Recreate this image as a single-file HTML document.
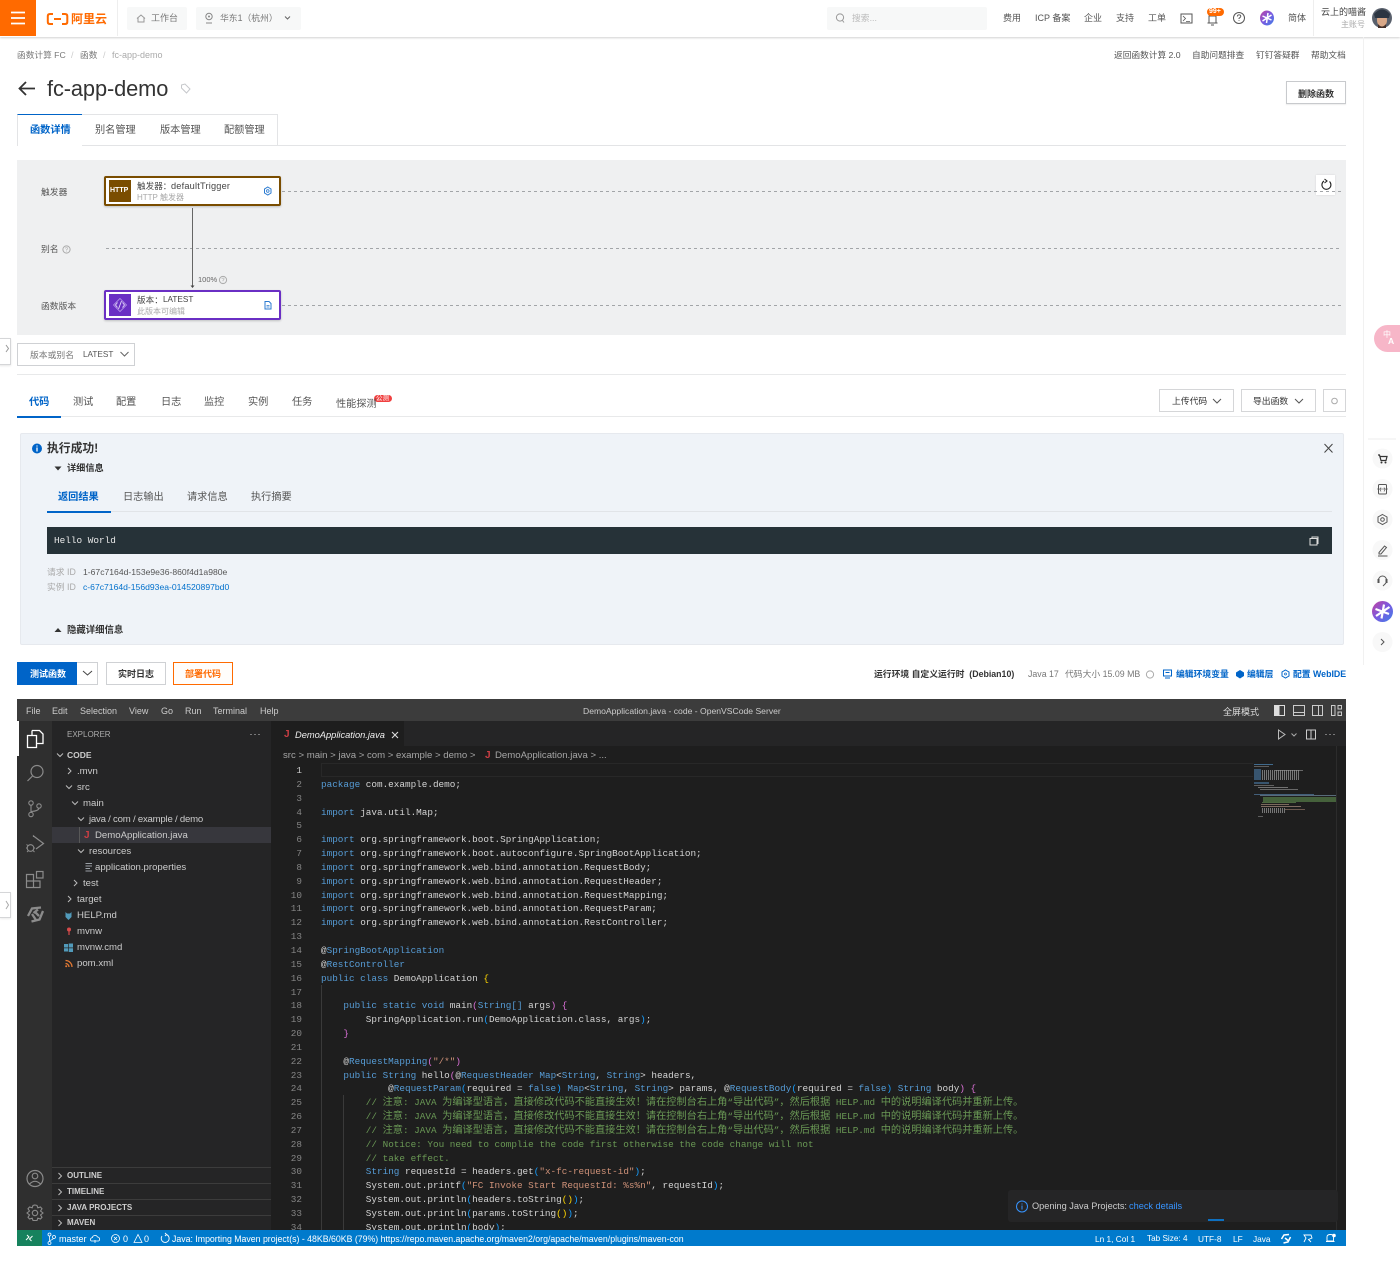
<!DOCTYPE html>
<html lang="zh-CN">
<head>
<meta charset="utf-8">
<title>fc-app-demo</title>
<style>
html,body{margin:0;padding:0;background:#fff;}
body{position:relative;width:1400px;height:1277px;overflow:hidden;font-family:"Liberation Sans","Noto Sans CJK SC",sans-serif;}
.r{position:absolute;box-sizing:border-box;}
.t{position:absolute;white-space:nowrap;line-height:14px;font-size:10.2px;color:#333;}
.g{color:#888;}
.b{color:#0064c8;}
.w{font-weight:700;}
.s{color:#ccc;font-size:9.6px;}
.m{color:#fff;font-size:9px;}
.h{color:#cfcfcf;font-size:8px;font-weight:700;}
pre{position:absolute;margin:0;font-family:"Liberation Mono","Noto Sans CJK SC",monospace;font-size:9.33px;line-height:13.84px;color:#d4d4d4;}
pre b{font-weight:400;font-size:10.2px;font-family:"Noto Sans CJK SC",sans-serif;line-height:0;}
.k{color:#569cd6}.st{color:#ce9178}.c{color:#6a9955}.y{color:#ffd700}.p{color:#da70d6}.l{color:#179fff}
svg{position:absolute;left:0;top:0;}
</style>
</head>
<body>
<!-- header -->
<div class="r" style="left:0;top:0;width:1400px;height:37px;background:#fff;box-shadow:0 1px 2px rgba(0,0,0,.18);"></div>
<div class="r" style="left:0;top:0;width:36px;height:36px;background:#ff6a00;"></div>
<div class="r" style="left:117px;top:0;width:1px;height:36px;background:#eee;"></div>
<div class="r" style="left:127px;top:7px;width:60px;height:23px;background:#f7f8f8;border-radius:2px;"></div>
<div class="r" style="left:196px;top:7px;width:105px;height:23px;background:#f7f8f8;border-radius:2px;"></div>
<div class="r" style="left:827px;top:7px;width:160px;height:23px;background:#f7f8f8;border-radius:2px;"></div>
<div class="r" style="left:1313px;top:0;width:1px;height:36px;background:#eee;"></div>
<div class="r" style="left:1363px;top:37px;width:1px;height:628px;background:#f1f1f1;"></div>

<!-- page lines & tabs -->
<div class="r" style="left:17px;top:145px;width:1329px;height:1px;background:#e3e4e6;"></div>
<div class="r" style="left:17px;top:114px;width:66px;height:32px;background:#fff;border-top:1px solid #0064c8;border-left:1px solid #e3e4e6;border-right:1px solid #e3e4e6;"></div>
<div class="r" style="left:82px;top:114px;width:66px;height:31px;background:#fff;border-top:1px solid #e3e4e6;border-right:1px solid #e3e4e6;"></div>
<div class="r" style="left:147px;top:114px;width:66px;height:31px;background:#fff;border-top:1px solid #e3e4e6;border-right:1px solid #e3e4e6;"></div>
<div class="r" style="left:212px;top:114px;width:66px;height:31px;background:#fff;border-top:1px solid #e3e4e6;border-right:1px solid #e3e4e6;"></div>
<div class="r" style="left:1286px;top:81px;width:60px;height:23px;background:#fff;border:1px solid #c8cacd;box-shadow:0 1px 1px rgba(0,0,0,.08);"></div>

<!-- diagram -->
<div class="r" style="left:17px;top:160px;width:1329px;height:175px;background:#eff0f1;"></div>
<div class="r" style="left:104px;top:176px;width:177px;height:30px;background:#fff;border:2px solid #7a4d00;border-radius:2px;box-shadow:0 1px 2px rgba(0,0,0,.2);"></div>
<div class="r" style="left:109px;top:180px;width:22px;height:22px;background:#7a4d00;"></div>
<div class="r" style="left:104px;top:290px;width:177px;height:30px;background:#fff;border:2px solid #6a2fc4;border-radius:2px;box-shadow:0 1px 2px rgba(0,0,0,.2);"></div>
<div class="r" style="left:109px;top:294px;width:22px;height:22px;background:#6a2fc4;"></div>
<div class="r" style="left:1316px;top:175px;width:19px;height:20px;background:#fff;box-shadow:0 0 2px rgba(0,0,0,.12);"></div>

<!-- selector row -->
<div class="r" style="left:-1px;top:338px;width:12px;height:27px;background:#fff;border:1px solid #d5d6d8;box-shadow:0 1px 2px rgba(0,0,0,.1);"></div>
<div class="r" style="left:0;top:892px;width:11px;height:26px;background:#fff;border:1px solid #d5d6d8;border-left:0;box-shadow:0 1px 2px rgba(0,0,0,.08);"></div>
<div class="r" style="left:17px;top:343px;width:118px;height:23px;background:#fff;border:1px solid #cfd1d4;"></div>
<div class="r" style="left:17px;top:374px;width:1329px;height:1px;background:#e8e9ea;"></div>
<div class="r" style="left:17px;top:416px;width:1329px;height:1px;background:#e8e9ea;"></div>
<div class="r" style="left:17px;top:416px;width:44px;height:2px;background:#0064c8;"></div>
<div class="r" style="left:1159px;top:389px;width:75px;height:23px;background:#fff;border:1px solid #d5d6d8;"></div>
<div class="r" style="left:1241px;top:389px;width:75px;height:23px;background:#fff;border:1px solid #d5d6d8;"></div>
<div class="r" style="left:1323px;top:389px;width:23px;height:23px;background:#fff;border:1px solid #d5d6d8;"></div>
<div class="r" style="left:374px;top:395px;width:18px;height:7px;background:#f04040;border-radius:4px;"></div>

<!-- alert -->
<div class="r" style="left:20px;top:433px;width:1324px;height:212px;background:#eff3f8;border:1px solid #e6e9ee;border-radius:2px;"></div>
<div class="r" style="left:47px;top:511px;width:1285px;height:1px;background:#e1e4e8;"></div>
<div class="r" style="left:47px;top:511px;width:64px;height:2px;background:#0064c8;"></div>
<div class="r" style="left:47px;top:527px;width:1285px;height:27px;background:#263238;"></div>

<!-- action row -->
<div class="r" style="left:17px;top:662px;width:60px;height:23px;background:#0064c8;"></div>
<div class="r" style="left:77px;top:662px;width:21px;height:23px;background:#fff;border:1px solid #cfd1d4;border-left:0;"></div>
<div class="r" style="left:106px;top:662px;width:60px;height:23px;background:#fff;border:1px solid #cfd1d4;"></div>
<div class="r" style="left:173px;top:662px;width:60px;height:23px;background:#fffdfb;border:1px solid #ff6a00;"></div>

<!-- vscode -->
<div class="r" style="left:17px;top:699px;width:1329px;height:547px;background:#1e1e1e;overflow:hidden;"></div>
<div class="r" style="left:17px;top:699px;width:1329px;height:22px;background:#3c3c3c;"></div>
<div class="r" style="left:17px;top:721px;width:35px;height:509px;background:#2f2f2f;"></div>
<div class="r" style="left:52px;top:721px;width:219px;height:509px;background:#252526;"></div>
<div class="r" style="left:17px;top:721px;width:2px;height:35px;background:#fff;"></div>
<div class="r" style="left:52px;top:827px;width:219px;height:16px;background:#37373d;"></div>
<div class="r" style="left:79px;top:827px;width:1px;height:16px;background:#585858;"></div>
<div class="r" style="left:52px;top:1167px;width:219px;height:1px;background:#3c3c3c;"></div>
<div class="r" style="left:52px;top:1183px;width:219px;height:1px;background:#3c3c3c;"></div>
<div class="r" style="left:52px;top:1199px;width:219px;height:1px;background:#3c3c3c;"></div>
<div class="r" style="left:52px;top:1215px;width:219px;height:1px;background:#3c3c3c;"></div>
<div class="r" style="left:271px;top:721px;width:1075px;height:25px;background:#252526;"></div>
<div class="r" style="left:271px;top:721px;width:133px;height:25px;background:#1e1e1e;"></div>
<div class="r" style="left:321px;top:763px;width:932px;height:14px;border:1px solid #282828;border-right:0;"></div>
<div class="r" style="left:321px;top:985px;width:1px;height:245px;background:#3a3a3a;"></div>
<div class="r" style="left:343px;top:1095px;width:1px;height:135px;background:#3a3a3a;"></div>
<div class="r" style="left:1336px;top:746px;width:1px;height:484px;background:#2c2c2c;"></div>

<!-- code -->
<div class="r" style="left:271px;top:764px;width:1060px;height:466px;overflow:hidden;">
<pre style="left:0;top:0;width:31px;text-align:right;color:#858585;"><span style="color:#c6c6c6">1</span>
2
3
4
5
6
7
8
9
10
11
12
13
14
15
16
17
18
19
20
21
22
23
24
25
26
27
28
29
30
31
32
33
34</pre>
<pre style="left:50px;top:0;">

<span class="k">package</span> com.example.demo;

<span class="k">import</span> java.util.Map;

<span class="k">import</span> org.springframework.boot.SpringApplication;
<span class="k">import</span> org.springframework.boot.autoconfigure.SpringBootApplication;
<span class="k">import</span> org.springframework.web.bind.annotation.RequestBody;
<span class="k">import</span> org.springframework.web.bind.annotation.RequestHeader;
<span class="k">import</span> org.springframework.web.bind.annotation.RequestMapping;
<span class="k">import</span> org.springframework.web.bind.annotation.RequestParam;
<span class="k">import</span> org.springframework.web.bind.annotation.RestController;

@<span class="k">SpringBootApplication</span>
@<span class="k">RestController</span>
<span class="k">public class</span> DemoApplication <span class="y">{</span>

    <span class="k">public static void</span> main<span class="p">(</span><span class="k">String[]</span> args<span class="p">)</span> <span class="p">{</span>
        SpringApplication.run<span class="l">(</span>DemoApplication.class, args<span class="l">)</span>;
    <span class="p">}</span>

    @<span class="k">RequestMapping</span><span class="p">(</span><span class="st">"/*"</span><span class="p">)</span>
    <span class="k">public String</span> hello<span class="p">(</span>@<span class="k">RequestHeader Map</span>&lt;<span class="k">String</span>, <span class="k">String</span>&gt; headers,
            @<span class="k">RequestParam</span><span class="l">(</span>required = <span class="k">false</span><span class="l">)</span> <span class="k">Map</span>&lt;<span class="k">String</span>, <span class="k">String</span>&gt; params, @<span class="k">RequestBody</span><span class="l">(</span>required = <span class="k">false</span><span class="l">)</span> <span class="k">String</span> body<span class="p">)</span> <span class="p">{</span>
        <span class="c">// <b>注意</b>: JAVA <b>为编译型语言&#xFF0C;直接修改代码不能直接生效&#xFF01;请在控制台右上角</b>“<b>导出代码</b>”<b>&#xFF0C;然后根据</b> HELP.md <b>中的说明编译代码并重新上传。</b></span>
        <span class="c">// <b>注意</b>: JAVA <b>为编译型语言&#xFF0C;直接修改代码不能直接生效&#xFF01;请在控制台右上角</b>“<b>导出代码</b>”<b>&#xFF0C;然后根据</b> HELP.md <b>中的说明编译代码并重新上传。</b></span>
        <span class="c">// <b>注意</b>: JAVA <b>为编译型语言&#xFF0C;直接修改代码不能直接生效&#xFF01;请在控制台右上角</b>“<b>导出代码</b>”<b>&#xFF0C;然后根据</b> HELP.md <b>中的说明编译代码并重新上传。</b></span>
        <span class="c">// Notice: You need to complie the code first otherwise the code change will not</span>
        <span class="c">// take effect.</span>
        <span class="k">String</span> requestId = headers.get<span class="l">(</span><span class="st">"x-fc-request-id"</span><span class="l">)</span>;
        System.out.printf<span class="l">(</span><span class="st">"FC Invoke Start RequestId: %s%n"</span>, requestId<span class="l">)</span>;
        System.out.println<span class="l">(</span>headers.toString<span class="y">()</span><span class="l">)</span>;
        System.out.println<span class="l">(</span>params.toString<span class="y">()</span><span class="l">)</span>;
        System.out.println<span class="l">(</span>body<span class="l">)</span>;</pre>
</div>

<!-- notification & status bar -->
<div class="r" style="left:1008px;top:1190px;width:330px;height:32px;background:#252526;border-radius:3px;"></div>
<div class="r" style="left:1208px;top:1219px;width:16px;height:2px;background:#0e70c0;"></div>
<div class="r" style="left:17px;top:1230px;width:1329px;height:16px;background:#007acc;"></div>
<div class="r" style="left:17px;top:1230px;width:25px;height:16px;background:#16825d;"></div>

<!-- icons / line art -->
<svg width="1400" height="1277" viewBox="0 0 1400 1277" fill="none">
<!-- hamburger -->
<path d="M11 12.500H25M11 18H25M11 23.500H25" stroke="#fff" stroke-width="1.800"/>
<!-- logo -->
<path d="M53 14H50Q47.800 14 47.800 16V22Q47.800 24 50 24H53M62 14H65Q67.300 14 67.300 16V22Q67.300 24 65 24H62M54 19H61" stroke="#ff6a00" stroke-width="2"/>
<!-- header icons -->
<path d="M137 18.500L141 15L145 18.500M138 18V22H144V18" stroke="#999"/>
<circle cx="209" cy="16.500" r="3.200" stroke="#888"/><circle cx="209" cy="16.500" r="1" fill="#888"/><path d="M206 23H212" stroke="#888"/>
<path d="M285 16.500L287.500 19L290 16.500" stroke="#666"/>
<circle cx="840" cy="17.500" r="3.600" stroke="#999"/><path d="M842.500 20.500L844 22.500" stroke="#999"/>
<rect x="1181" y="14" width="11" height="9" stroke="#555"/><path d="M1183 16L1185.500 18.500L1183 21M1186 21.500H1190" stroke="#555" stroke-width=".8"/>
<path d="M1209 23V16H1216V23M1207.500 23H1217.500M1211 25H1214" stroke="#555"/>
<rect x="1207" y="8" width="17" height="8" rx="4" fill="#ff6a00"/>
<circle cx="1239" cy="18" r="5.500" stroke="#555"/><path d="M1237.300 16.500Q1237.500 14.800 1239 14.800Q1240.800 14.800 1240.800 16.300Q1240.800 17.300 1239 18.300V19M1239 20.300V21" stroke="#555" stroke-width=".9"/>
<defs>
<linearGradient id="st" x1="0" y1="0" x2="1" y2="1"><stop offset="0" stop-color="#c2409f"/><stop offset=".5" stop-color="#7a5be0"/><stop offset="1" stop-color="#3f7fe8"/></linearGradient>
<pattern id="mm" width="2" height="2" patternUnits="userSpaceOnUse"><rect width="1" height="2" fill="#b0b0b0"/></pattern>
</defs>
<ellipse cx="1267" cy="18" rx="7" ry="7.500" fill="url(#st)"/><path d="M1268 13L1266.500 23M1262.500 16L1271.500 20M1262.500 21L1271.500 15" stroke="#fff" stroke-width="1.500"/>
<circle cx="1382" cy="18" r="10" fill="#59606c"/><ellipse cx="1382" cy="20" rx="5" ry="7" fill="#d9a888"/><path d="M1374 14Q1382 5 1390 14L1389 18H1375Z" fill="#2c3542"/><path d="M1378 24Q1382 29 1386 24L1386 28H1378Z" fill="#43302a"/>
<!-- title -->
<path d="M35 88.500H19.500M26 82L19.500 88.500L26 95" stroke="#333" stroke-width="1.800"/>
<path d="M181.500 85L185 84L190 89L186.500 93L181.500 88Z" stroke="#c6c8cb"/>
<!-- diagram -->
<path d="M282 191.500H1342M106 248.500H1342M282 305.500H1342" stroke="#a2a5a8" stroke-dasharray="3 3"/>
<path d="M192.500 208V286" stroke="#666"/><path d="M190.500 285.500H194.500L192.500 288Z" fill="#444"/>
<circle cx="66.500" cy="249.500" r="3.600" stroke="#aaa"/><circle cx="223" cy="280" r="3.600" stroke="#aaa"/>
<path d="M65.300 248.500Q65.500 247.500 66.500 247.500Q67.700 247.500 67.600 248.600Q67.500 249.300 66.500 249.800V250.500M66.500 251.200V251.800M221.800 279Q222 278 223 278Q224.200 278 224.100 279.100Q224 279.800 223 280.300V281M223 281.700V282.300" stroke="#aaa" stroke-width=".6"/>
<path d="M267.800 187L271 189V193L267.800 195L264.500 193V189Z" stroke="#2a7ad0"/><circle cx="267.800" cy="191" r="1.300" stroke="#2a7ad0" stroke-width=".8"/>
<path d="M265 301.500H269L271 303.500V309H265Z" stroke="#2a7ad0"/><path d="M266.500 305.500H269.500M266.500 307H269.500" stroke="#2a7ad0" stroke-width=".7"/>
<path d="M120 298.500L126.500 305L120 311.500L113.500 305Z" stroke="#b79be8" stroke-width=".8"/><path d="M117.500 302.500L115.500 305L117.500 307.500M122.500 302.500L124.500 305L122.500 307.500M118.500 309L121.500 301" stroke="#e6dafa" stroke-width=".9"/>
<path d="M1329.500 181.500A4.500 4.500 0 1 1 1324 181M1324.500 179L1327 181L1324.500 183" stroke="#222" stroke-width="1.100"/>
<path d="M6 345L8.500 348.500L6 352" stroke="#999"/>
<path d="M120.500 352L124.500 356L128.500 352" stroke="#666"/>
<path d="M1213 399L1217 403L1221 399M1295 399L1299 403L1303 399" stroke="#555"/>
<circle cx="1334.500" cy="401" r="2.800" stroke="#aaa"/>
<!-- alert -->
<circle cx="37" cy="448.500" r="5" fill="#0064c8"/><path d="M37 447.500V451.500M37 445.500V446.500" stroke="#fff" stroke-width="1.300"/>
<path d="M1324.500 444L1332.500 452.500M1332.500 444L1324.500 452.500" stroke="#444"/>
<path d="M54.500 466.500H61.500L58 470.500Z" fill="#333"/><path d="M54.500 632H61.500L58 628Z" fill="#333"/>
<path d="M1310 538.500H1317V545H1310Z" stroke="#ddd" stroke-width="1"/><path d="M1312 538.500V537H1318V543.500H1317" stroke="#ddd"/>
<path d="M83 671L87.500 675L92 671" stroke="#444"/>
<circle cx="1150" cy="674.500" r="3.600" stroke="#aaa"/>
<rect x="1163.500" y="670" width="8" height="6" stroke="#0064c8"/><path d="M1165 678H1170M1165.500 672.500H1169.500" stroke="#0064c8"/>
<path d="M1240 670L1244 672.500V676L1240 678.500L1236 676V672.500Z" fill="#0064c8"/>
<path d="M1285.500 670L1289 672V676L1285.500 678L1282 676V672Z" stroke="#0064c8"/><circle cx="1285.500" cy="674" r="1" stroke="#0064c8" stroke-width=".7"/>
<!-- right dock -->
<rect x="1374" y="325" width="40" height="27" rx="13.500" fill="#f7b6c8"/>
<path d="M1368 439H1396" stroke="#eee"/>
<circle cx="1382.500" cy="458.500" r="10" fill="#f8f8f8"/><circle cx="1382.500" cy="489" r="10" fill="#f8f8f8"/><circle cx="1382.500" cy="519.500" r="10" fill="#f8f8f8"/><circle cx="1382.500" cy="550" r="10" fill="#f8f8f8"/><circle cx="1382.500" cy="580.500" r="10" fill="#f8f8f8"/><circle cx="1382.500" cy="642" r="10" fill="#f8f8f8"/>
<path d="M1378 455H1379.500L1381 460.500H1386L1387 456.500H1380" stroke="#333" stroke-width="1.200"/><circle cx="1381.500" cy="462.500" r="1" fill="#333"/><circle cx="1385.500" cy="462.500" r="1" fill="#333"/>
<rect x="1378.500" y="484.500" width="8" height="9.500" rx="1" stroke="#555"/><path d="M1381 487.500L1380 489.500L1381 491.500M1384 487.500L1385 489.500L1384 491.500" stroke="#555" stroke-width=".7"/><path d="M1377 489H1388" stroke="#555" stroke-width=".6"/>
<path d="M1382.500 514.500L1387 517V522L1382.500 524.500L1378 522V517Z" stroke="#555"/><circle cx="1382.500" cy="519.500" r="1.800" stroke="#555"/>
<path d="M1379 552.500L1384.500 546L1386.500 547.500L1381 554H1379ZM1378 556H1387.500" stroke="#555"/>
<path d="M1378.500 582V580A4 4 0 0 1 1386.500 580V582" stroke="#555"/><rect x="1377.500" y="579" width="2" height="4" fill="#555"/><rect x="1385.500" y="579" width="2" height="4" fill="#555"/><path d="M1386 583L1383 586" stroke="#555"/>
<circle cx="1382.500" cy="611.500" r="10.500" fill="url(#st)"/><path d="M1384 604.500L1381.500 618.500M1375.500 609L1389 614M1376 616L1389.500 607" stroke="#fff" stroke-width="2.200"/>
<path d="M1381 639L1384 642L1381 645" stroke="#555"/>
<!-- left dock 2 -->
<path d="M6 901L8.500 905L6 909" stroke="#aaa"/>
<!-- vscode titlebar icons -->
<rect x="1274.500" y="705.500" width="10" height="10" stroke="#ddd"/><rect x="1275" y="706" width="4.500" height="9" fill="#ddd"/>
<rect x="1293.500" y="705.500" width="11" height="10" stroke="#ccc"/><path d="M1294 712.500H1304" stroke="#ccc"/>
<rect x="1312.500" y="705.500" width="10" height="10" stroke="#ccc"/><path d="M1318.500 706V715" stroke="#ccc"/>
<path d="M1331.500 705.500H1335V715.500H1331.500ZM1338 705.500H1341.500V709H1338ZM1338 712H1341.500V715.500H1338Z" stroke="#ccc"/>
<path d="M1278.500 730L1285 734.500L1278.500 739Z" stroke="#bbb"/>
<path d="M1291.500 733.500L1294 736L1296.500 733.500" stroke="#aaa"/>
<rect x="1306.500" y="730" width="9" height="9" stroke="#ccc"/><path d="M1311 730V739" stroke="#ccc"/>
<path d="M1325.500 734.500H1326.500M1329.500 734.500H1330.500M1333.500 734.500H1334.500M250.500 734.500H251.500M254.500 734.500H255.500M258.500 734.500H259.500" stroke="#ccc" stroke-width="1.100"/>
<path d="M392 732L398 738M398 732L392 738" stroke="#ddd" stroke-width="1.100"/>
<!-- activity bar -->
<path d="M32 730.500H39.500L43 734V743.500H36.500M32 730.500V735" stroke="#fff" stroke-width="1.300"/><path d="M27.500 735.500H36.500V747.500H27.500Z" stroke="#fff" stroke-width="1.300"/>
<circle cx="37" cy="771.500" r="6" stroke="#8b8b8b" stroke-width="1.200"/><path d="M32.500 776L27.500 781" stroke="#8b8b8b" stroke-width="1.200"/>
<circle cx="31" cy="803" r="2.200" stroke="#8b8b8b" stroke-width="1.100"/><circle cx="31" cy="814.500" r="2.200" stroke="#8b8b8b" stroke-width="1.100"/><circle cx="39" cy="806" r="2.200" stroke="#8b8b8b" stroke-width="1.100"/><path d="M31 805.500V812M39 808.500Q38 811 31.500 811.500" stroke="#8b8b8b" stroke-width="1.100"/>
<path d="M33.500 837V836L43.500 843.500L36 849" stroke="#8b8b8b" stroke-width="1.200"/><circle cx="30.500" cy="848" r="3.300" stroke="#8b8b8b" stroke-width="1.100"/><path d="M26.500 844.500L28.500 846M26 848H27M34 848H35M27 852L28.500 850.500M33 850.500L34.500 852" stroke="#8b8b8b"/>
<path d="M26.500 874.500H33.500V887.500H26.500ZM26.500 881H40V887.500H33.500" stroke="#8b8b8b" stroke-width="1.200"/><rect x="36.500" y="871.500" width="6.500" height="6.500" stroke="#8b8b8b" stroke-width="1.200"/>
<path d="M28 916L32 908.500L41 907.500M43 911L39.500 919.500L31.500 921.500M35 912L39 916M32 914L36 920M38 909.500L33.500 913" stroke="#8b8b8b" stroke-width="2.300"/>
<circle cx="35" cy="1178.500" r="8" stroke="#8b8b8b" stroke-width="1.200"/><circle cx="35" cy="1176" r="2.800" stroke="#8b8b8b" stroke-width="1.100"/><path d="M29.500 1184Q35 1178.500 40.500 1184" stroke="#8b8b8b" stroke-width="1.100"/>
<path d="M35 1205L37 1205.500L37.800 1207.800L40.500 1207L42 1208.800L40.500 1211L43 1213L40.500 1215L42 1217.200L40.500 1219L37.800 1218.200L37 1220.500H33L32.200 1218.200L29.500 1219L28 1217.200L29.500 1215L27 1213L29.500 1211L28 1208.800L29.500 1207L32.200 1207.800L33 1205.500Z" stroke="#8b8b8b" stroke-width="1.100"/><circle cx="35" cy="1213" r="2.700" stroke="#8b8b8b" stroke-width="1.100"/>
<!-- explorer chevrons -->
<path d="M57 753.500L60 756.500L63 753.500M66 785.500L69 788.500L72 785.500M72 801.500L75 804.500L78 801.500M78 817.500L81 820.500L84 817.500M78 849.500L81 852.500L84 849.500" stroke="#bbb"/>
<path d="M68 768L71 771L68 774M74 880L77 883L74 886M68 896L71 899L68 902M58.500 1173L61.500 1176L58.500 1179M58.500 1189L61.500 1192L58.500 1195M58.500 1205L61.500 1208L58.500 1211M58.500 1220L61.500 1223L58.500 1226" stroke="#bbb"/>
<!-- file icons -->
<path d="M85.500 863.500H92M85.500 866H92M85.500 868.500H90M85.500 871H92" stroke="#9aa0a6" stroke-width="1.100"/>
<path d="M65.500 912L67 913.500H70L71.500 912V917L68.500 920L65.500 917Z" fill="#519aba"/>
<circle cx="69" cy="929.500" r="2" fill="#d64a4a"/><path d="M69 931V935" stroke="#d64a4a" stroke-width="1.200"/>
<path d="M64 944H68V947.500H64ZM68.700 943.500H73V947.500H68.700ZM64 948.200H68V951.500H64ZM68.700 948.200H73V952H68.700Z" fill="#519aba"/>
<path d="M65.500 960.500A6.500 6.500 0 0 1 72 967M65.500 963.500A3.500 3.500 0 0 1 69 967" stroke="#e37933" stroke-width="1.300"/><circle cx="66.200" cy="966.300" r="1" fill="#e37933"/>
<!-- minimap -->
<g fill-opacity=".6">
<rect x="1254" y="764" width="19" height="1" fill="#569cd6"/><rect x="1254" y="766" width="15" height="1" fill="#888"/>
<rect x="1254" y="769" width="7" height="11" fill="#4a7aa5"/><rect x="1261" y="770" width="38" height="10" fill="url(#mm)"/><rect x="1275" y="770" width="28" height="1" fill="#999"/>
<rect x="1254" y="782" width="15" height="2" fill="#4a7aa5"/><rect x="1254" y="785" width="20" height="1" fill="#8c8c8c"/>
<rect x="1258" y="787" width="30" height="1" fill="#aaa"/><rect x="1260" y="789" width="38" height="1" fill="#999"/>
<rect x="1254" y="794" width="60" height="1" fill="#5a89b5"/><rect x="1260" y="795" width="76" height="1" fill="#7f9fb5"/>
<rect x="1263" y="797" width="73" height="5" fill="#5f8d4e"/><rect x="1262" y="802" width="34" height="1" fill="#6a9955"/>
<rect x="1261" y="804" width="28" height="1" fill="#b99b85"/><rect x="1261" y="806" width="40" height="1" fill="#c0a090"/><rect x="1261" y="808" width="24" height="5" fill="url(#mm)"/>
<rect x="1285" y="809" width="20" height="1" fill="#a08070"/><rect x="1258" y="816" width="5" height="1" fill="#888"/>
</g>
<!-- status bar icons -->
<path d="M26 1240L29 1237L27 1235M32.500 1236L29.500 1239L31.500 1241" stroke="#fff"/>
<circle cx="49.500" cy="1234.500" r="1.500" stroke="#fff" stroke-width=".8"/><circle cx="49.500" cy="1243" r="1.500" stroke="#fff" stroke-width=".8"/><circle cx="54" cy="1237" r="1.500" stroke="#fff" stroke-width=".8"/><path d="M49.500 1236V1241.500M53.500 1238.500Q52 1240 50 1240.500" stroke="#fff" stroke-width=".8"/>
<path d="M91.500 1241H98.500Q100 1240.500 99.500 1238.500Q99 1237 97.500 1237Q96.500 1235 94.500 1235.500Q92.500 1236 92.500 1237.500Q90.500 1238 90.500 1239.500Q90.500 1241 91.500 1241ZM95 1240V1243" stroke="#fff" stroke-width=".8"/>
<circle cx="115.500" cy="1238.500" r="4" stroke="#fff" stroke-width=".8"/><path d="M114 1237L117 1240M117 1237L114 1240" stroke="#fff" stroke-width=".8"/>
<path d="M134 1242.500L138 1234.500L142 1242.500Z" stroke="#fff" stroke-width=".8"/>
<path d="M166 1234.500A4 4 0 1 1 162 1236M165 1233L166.500 1234.500L165 1236" stroke="#fff" stroke-width=".9"/>
<path d="M1281.500 1239L1284 1235L1289 1234.500M1290.500 1237L1288 1242L1283.500 1243M1285 1238L1288 1240.500" stroke="#fff" stroke-width="1.500"/>
<path d="M1304 1242L1306 1238L1304 1235H1311L1312 1238L1308.500 1239.500L1311 1242" stroke="#fff" stroke-width=".9"/>
<path d="M1327 1241V1237Q1327 1234.500 1330.500 1234.500Q1333.500 1234.500 1333.500 1237V1241ZM1326 1241.500H1334.500" stroke="#fff" stroke-width=".9"/><circle cx="1334" cy="1235.500" r="1.800" fill="#fff"/>
<circle cx="1022" cy="1206.500" r="5.500" stroke="#3794ff"/><path d="M1022 1205.500V1209.500M1022 1203.500V1204.500" stroke="#3794ff"/>
</svg>

<!-- header text -->
<span class="t w" style="left:71px;top:12px;font-size:12px;color:#ff6a00;">阿里云</span>
<span class="t g" style="left:151px;top:11px;font-size:9px;color:#777;">工作台</span>
<span class="t g" style="left:220px;top:11px;font-size:8.800px;color:#777;">华东1&#xFF08;杭州&#xFF09;</span>
<span class="t" style="left:852px;top:11px;font-size:8.800px;color:#bbb;">搜索...</span>
<span class="t" style="left:1003px;top:11px;font-size:9px;color:#555;">费用</span>
<span class="t" style="left:1035px;top:11px;font-size:9px;color:#555;">ICP 备案</span>
<span class="t" style="left:1084px;top:11px;font-size:9px;color:#555;">企业</span>
<span class="t" style="left:1116px;top:11px;font-size:9px;color:#555;">支持</span>
<span class="t" style="left:1148px;top:11px;font-size:9px;color:#555;">工单</span>
<span class="t" style="left:1209px;top:5px;font-size:7px;color:#fff;font-weight:700;">99+</span>
<span class="t" style="left:1288px;top:11px;font-size:9px;color:#555;">简体</span>
<span class="t" style="left:1321px;top:5px;font-size:9px;color:#444;">云上的喵酱</span>
<span class="t" style="left:1341px;top:18px;font-size:8px;color:#aaa;">主账号</span>

<!-- breadcrumb -->
<span class="t" style="left:17px;top:48px;font-size:8.700px;color:#777;">函数计算 FC</span>
<span class="t" style="left:71px;top:48px;font-size:9px;color:#ccc;">/</span>
<span class="t" style="left:80px;top:48px;font-size:8.700px;color:#777;">函数</span>
<span class="t" style="left:103px;top:48px;font-size:9px;color:#ccc;">/</span>
<span class="t" style="left:112px;top:48px;font-size:9px;color:#aaa;">fc-app-demo</span>
<span class="t" style="left:1114px;top:48px;font-size:8.700px;color:#555;">返回函数计算 2.0</span>
<span class="t" style="left:1192px;top:48px;font-size:8.700px;color:#555;">自助问题排查</span>
<span class="t" style="left:1256px;top:48px;font-size:8.700px;color:#555;">钉钉答疑群</span>
<span class="t" style="left:1311px;top:48px;font-size:8.700px;color:#555;">帮助文档</span>
<span class="t" style="left:47px;top:82px;font-size:21.800px;color:#333;letter-spacing:-.1px;">fc-app-demo</span>
<span class="t w" style="left:1298px;top:87px;font-size:9px;color:#333;">删除函数</span>

<!-- tabs -->
<span class="t b w" style="left:30px;top:124px;">函数详情</span>
<span class="t" style="left:95px;top:124px;color:#555;">别名管理</span>
<span class="t" style="left:160px;top:124px;color:#555;">版本管理</span>
<span class="t" style="left:224px;top:124px;color:#555;">配额管理</span>

<!-- diagram text -->
<span class="t" style="left:41px;top:185px;font-size:8.800px;color:#555;">触发器</span>
<span class="t" style="left:41px;top:242px;font-size:8.800px;color:#555;">别名</span>
<span class="t" style="left:41px;top:299px;font-size:8.800px;color:#555;">函数版本</span>
<span class="t w" style="left:110px;top:184px;font-size:7px;color:#fff;">HTTP</span>
<span class="t" style="left:137px;top:179px;font-size:8.600px;color:#444;">触发器&#xFF1A;</span>
<span class="t" style="left:171px;top:179px;font-size:9.200px;letter-spacing:.2px;color:#444;">defaultTrigger</span>
<span class="t" style="left:137px;top:191px;font-size:8px;color:#aaa;">HTTP 触发器</span>
<span class="t" style="left:137px;top:293px;font-size:8.600px;color:#444;">版本&#xFF1A;</span>
<span class="t" style="left:163px;top:293px;font-size:8.200px;color:#444;">LATEST</span>
<span class="t" style="left:137px;top:305px;font-size:8px;color:#aaa;">此版本可编辑</span>
<span class="t" style="left:198px;top:273px;font-size:7.500px;color:#666;">100%</span>
<span class="t" style="left:30px;top:348px;font-size:8.800px;color:#777;">版本或别名</span>
<span class="t" style="left:83px;top:348px;font-size:8.200px;color:#555;">LATEST</span>

<!-- tabs 2 -->
<span class="t b w" style="left:29px;top:396px;">代码</span>
<span class="t" style="left:73px;top:396px;color:#555;">测试</span>
<span class="t" style="left:116px;top:396px;color:#555;">配置</span>
<span class="t" style="left:161px;top:396px;color:#555;">日志</span>
<span class="t" style="left:204px;top:396px;color:#555;">监控</span>
<span class="t" style="left:248px;top:396px;color:#555;">实例</span>
<span class="t" style="left:292px;top:396px;color:#555;">任务</span>
<span class="t" style="left:336px;top:398px;color:#555;">性能探测</span>
<span class="t" style="left:376px;top:392px;font-size:6.500px;color:#fff;">公测</span>
<span class="t" style="left:1172px;top:394px;font-size:8.800px;">上传代码</span>
<span class="t" style="left:1253px;top:394px;font-size:8.800px;">导出函数</span>

<!-- alert text -->
<span class="t w" style="left:47px;top:441px;font-size:11.800px;color:#333;">执行成功!</span>
<span class="t w" style="left:67px;top:461px;font-size:9.200px;color:#333;">详细信息</span>
<span class="t b w" style="left:58px;top:491px;">返回结果</span>
<span class="t" style="left:123px;top:491px;color:#555;">日志输出</span>
<span class="t" style="left:187px;top:491px;color:#555;">请求信息</span>
<span class="t" style="left:251px;top:491px;color:#555;">执行摘要</span>
<span class="t" style="left:54px;top:534px;font-family:'Liberation Mono',monospace;font-size:9.400px;color:#e8e8e8;">Hello World</span>
<span class="t" style="left:47px;top:565px;font-size:8.800px;color:#aaa;">请求 ID</span>
<span class="t" style="left:83px;top:565px;font-size:8.600px;color:#555;">1-67c7164d-153e9e36-860f4d1a980e</span>
<span class="t" style="left:47px;top:580px;font-size:8.800px;color:#aaa;">实例 ID</span>
<span class="t" style="left:83px;top:580px;font-size:8.600px;color:#0070cc;">c-67c7164d-156d93ea-014520897bd0</span>
<span class="t w" style="left:67px;top:623px;font-size:9.400px;color:#333;">隐藏详细信息</span>

<!-- action text -->
<span class="t w" style="left:30px;top:667px;font-size:9px;color:#fff;">测试函数</span>
<span class="t w" style="left:118px;top:667px;font-size:9px;color:#333;">实时日志</span>
<span class="t w" style="left:185px;top:667px;font-size:9px;color:#ff6a00;">部署代码</span>
<span class="t w" style="left:874px;top:667px;font-size:8.800px;color:#333;">运行环境 自定义运行时 &nbsp;(Debian10)</span>
<span class="t" style="left:1028px;top:667px;font-size:8.800px;color:#777;">Java 17</span>
<span class="t" style="left:1065px;top:667px;font-size:8.800px;color:#777;">代码大小 15.09 MB</span>
<span class="t w" style="left:1176px;top:667px;font-size:8.800px;color:#0064c8;">编辑环境变量</span>
<span class="t w" style="left:1247px;top:667px;font-size:8.800px;color:#0064c8;">编辑层</span>
<span class="t w" style="left:1293px;top:667px;font-size:8.800px;color:#0064c8;">配置 WebIDE</span>

<!-- pink translate -->
<span class="t" style="left:1383px;top:328px;font-size:8px;color:#fff;">中</span>
<span class="t w" style="left:1388px;top:334px;font-size:8.500px;color:#fff;">A</span>

<!-- vscode menu -->
<span class="t m" style="left:26px;top:704px;color:#ccc;">File</span>
<span class="t m" style="left:52px;top:704px;color:#ccc;">Edit</span>
<span class="t m" style="left:80px;top:704px;color:#ccc;">Selection</span>
<span class="t m" style="left:129px;top:704px;color:#ccc;">View</span>
<span class="t m" style="left:161px;top:704px;color:#ccc;">Go</span>
<span class="t m" style="left:185px;top:704px;color:#ccc;">Run</span>
<span class="t m" style="left:213px;top:704px;color:#ccc;">Terminal</span>
<span class="t m" style="left:260px;top:704px;color:#ccc;">Help</span>
<span class="t m" style="left:583px;top:704px;color:#ccc;font-size:8.600px;">DemoApplication.java - code - OpenVSCode Server</span>
<span class="t m" style="left:1223px;top:705px;color:#ddd;">全屏模式</span>

<!-- explorer -->
<span class="t" style="left:67px;top:728px;font-size:8px;color:#aaa;">EXPLORER</span>
<span class="t w" style="left:67px;top:748px;font-size:8.500px;color:#ccc;">CODE</span>
<span class="t s" style="left:77px;top:765px;">.mvn</span>
<span class="t s" style="left:77px;top:781px;">src</span>
<span class="t s" style="left:83px;top:797px;">main</span>
<span class="t s" style="left:89px;top:813px;letter-spacing:-.22px;">java / com / example / demo</span>
<span class="t w" style="left:84px;top:829px;font-size:10px;color:#cc3e44;">J</span>
<span class="t s" style="left:95px;top:829px;">DemoApplication.java</span>
<span class="t s" style="left:89px;top:845px;">resources</span>
<span class="t s" style="left:95px;top:861px;">application.properties</span>
<span class="t s" style="left:83px;top:877px;">test</span>
<span class="t s" style="left:77px;top:893px;">target</span>
<span class="t s" style="left:77px;top:909px;">HELP.md</span>
<span class="t s" style="left:77px;top:925px;">mvnw</span>
<span class="t s" style="left:77px;top:941px;">mvnw.cmd</span>
<span class="t s" style="left:77px;top:957px;">pom.xml</span>
<span class="t h" style="left:67px;top:1169px;">OUTLINE</span>
<span class="t h" style="left:67px;top:1185px;">TIMELINE</span>
<span class="t h" style="left:67px;top:1201px;">JAVA PROJECTS</span>
<span class="t h" style="left:67px;top:1216px;">MAVEN</span>

<!-- editor tab + breadcrumb -->
<span class="t w" style="left:284px;top:728px;font-size:10px;color:#cc3e44;">J</span>
<span class="t" style="left:295px;top:728px;font-size:9.300px;font-style:italic;color:#eee;">DemoApplication.java</span>
<span class="t" style="left:283px;top:749px;font-size:9.600px;color:#a5a5a5;">src &gt; main &gt; java &gt; com &gt; example &gt; demo &gt;</span>
<span class="t w" style="left:485px;top:749px;font-size:10px;color:#cc3e44;">J</span>
<span class="t" style="left:495px;top:749px;font-size:9.600px;color:#a5a5a5;">DemoApplication.java &gt; ...</span>

<!-- notification -->
<span class="t" style="left:1032px;top:1199px;font-size:9.200px;color:#ccc;">Opening Java Projects:</span>
<span class="t" style="left:1129px;top:1199px;font-size:9.200px;color:#3794ff;">check details</span>

<!-- status -->
<span class="t" style="left:59px;top:1232px;font-size:9px;color:#fff;">master</span>
<span class="t" style="left:123px;top:1232px;font-size:9px;color:#fff;">0</span>
<span class="t" style="left:144px;top:1232px;font-size:9px;color:#fff;">0</span>
<span class="t" style="left:172px;top:1232px;font-size:8.760px;color:#fff;">Java: Importing Maven project(s) - 48KB/60KB (79%) https://repo.maven.apache.org/maven2/org/apache/maven/plugins/maven-con</span>
<span class="t" style="left:1095px;top:1232px;font-size:8.300px;color:#fff;">Ln 1, Col 1</span>
<span class="t" style="left:1147px;top:1232px;font-size:8.200px;color:#fff;">Tab Size: 4</span>
<span class="t" style="left:1198px;top:1232px;font-size:8.300px;color:#fff;">UTF-8</span>
<span class="t" style="left:1233px;top:1232px;font-size:8.300px;color:#fff;">LF</span>
<span class="t" style="left:1253px;top:1232px;font-size:8.300px;color:#fff;">Java</span>
</body>
</html>
